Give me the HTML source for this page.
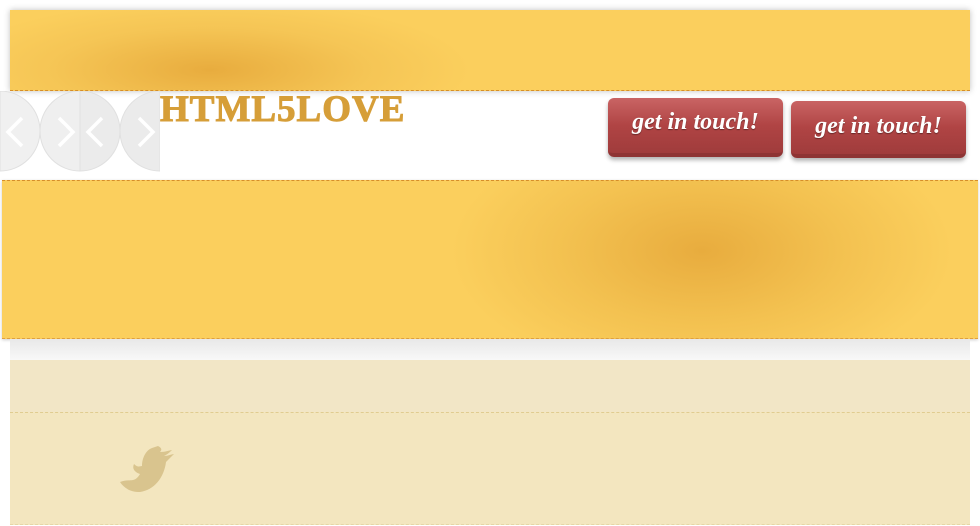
<!DOCTYPE html>
<html><head><style>
body{margin:0;width:980px;height:526px;background:#fff;position:relative;overflow:hidden;font-family:"Liberation Sans",sans-serif}
div{position:absolute;box-sizing:border-box}
.top{left:10px;top:10px;width:960px;height:81px;background:radial-gradient(ellipse 260px 70px at 200px 60px,#e8ac3e,#f5c555 60%,#fbcf5d 100%);box-shadow:0 0 6px rgba(0,0,0,.25);border-bottom:1px dashed #d68e2a}
.big{left:2px;top:180px;width:976px;height:159px;background:radial-gradient(ellipse 250px 130px at 700px 70px,#e8ac3e,#f3c150 55%,#fbcf5d 100%);border-top:1px dashed #d68e2a;border-bottom:1px dashed #e0a040;box-shadow:0 1px 3px rgba(0,0,0,.2)}
.grid{left:10px;top:339px;width:960px;height:21px;background:linear-gradient(#e8e8e8,#f8f8f8);}
.b1{left:10px;top:360px;width:960px;height:52px;background:#f2e6c6}
.b2{left:10px;top:412px;width:960px;height:113px;background:#f3e6bf;border-top:1px dashed #e0cc90;border-bottom:1px dashed #e6d6a6}
.logo{left:160px;top:88px;font-family:"Liberation Serif",serif;font-weight:bold;font-size:37px;color:#d69e38;letter-spacing:1px;transform:scale(1,1);transform-origin:left;-webkit-text-stroke:1px #d69e38}
.btn{width:175px;border-radius:6px;background:linear-gradient(#c96464,#b04444 50%,#a03c3c);border-bottom:4px solid #8e3434;box-shadow:0 3px 4px rgba(0,0,0,.3);color:#fff;font-family:"Liberation Serif",serif;font-style:italic;font-weight:bold;font-size:24px;text-align:center;text-shadow:0 1px 1px rgba(0,0,0,.4)}
</style></head><body>
<div class="top"></div>
<svg style="position:absolute;left:0;top:91px" width="160" height="81">
<path d="M0 0 A40 40 0 0 1 0 80 Z" fill="#f0f0f0" stroke="#e0e0e0"/>
<path d="M40 40 A40 40 0 0 1 80 0 L80 80 A40 40 0 0 1 40 40Z" fill="#efefef" stroke="#e0e0e0"/>
<path d="M80 0 A40 40 0 0 1 120 40 A40 40 0 0 1 80 80Z" fill="#ebebeb" stroke="#e0e0e0"/>
<path d="M120 40 A40 40 0 0 1 160 0 L160 80 A40 40 0 0 1 120 40Z" fill="#ebebeb" stroke="#e0e0e0"/>
<g fill="none" stroke="#fff" stroke-width="3.5">
<path d="M22 27 L8 41 L22 55"/><path d="M59 27 L73 41 L59 55"/><path d="M102 27 L88 41 L102 55"/><path d="M139 27 L153 41 L139 55"/></g>
</svg>
<div class="logo">HTML5LOVE</div>
<div class="btn" style="left:608px;top:98px;height:59px;line-height:48px">get in touch!</div>
<div class="btn" style="left:791px;top:101px;height:57px;line-height:50px">get in touch!</div>
<div class="big"></div>
<div class="grid"></div>
<div class="b1"></div>
<div class="b2"></div>
<svg style="position:absolute;left:118px;top:444px" width="66" height="50" viewBox="0 0 66 50"><path d="M2 38 C12 34 16 40 22 30 C16 28 14 24 16 20 C20 24 22 22 24 22 C24 14 28 6 34 4 L40 2 C44 4 44 6 42 8 C48 8 52 6 54 6 C52 8 50 10 46 12 C50 12 54 10 56 10 C52 14 50 16 48 18 C46 34 36 46 22 48 C12 48 6 44 2 38Z" fill="#d9c48e"/></svg>
</body></html>
